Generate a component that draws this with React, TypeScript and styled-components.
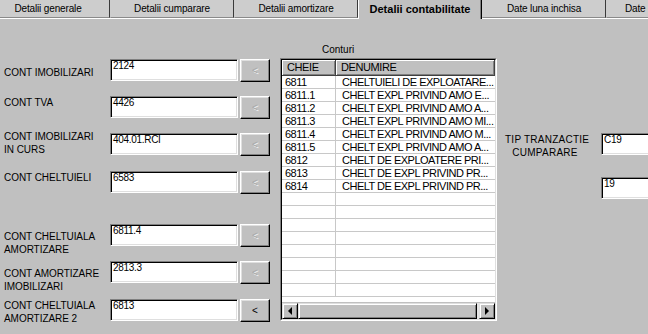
import { createGlobalStyle, styled } from 'styled-components';

const GlobalStyle = createGlobalStyle`
  html, body {
    margin: 0;
    padding: 0;
    background: #c0c0c0;
  }
  body {
    font-family: "Liberation Sans", Arial, sans-serif;
    font-size: 10px;
    color: #000;
  }
`;

const Screen = styled.div`
  width: 648px;
  height: 334px;
  overflow: hidden;
  background: #c0c0c0;
  display: flex;
  flex-direction: column;
`;

const TabStrip = styled.div`
  display: flex;
  align-items: flex-start;
  height: 18px;
  margin-left: -14px;
  position: relative;
  z-index: 1;
`;

const Tab = styled.div<{ $active?: boolean; $left?: boolean }>`
  flex: 0 0 124px;
  box-sizing: border-box;
  display: flex;
  align-items: center;
  justify-content: ${({ $left }) => ($left ? 'flex-start' : 'center')};
  padding-left: ${({ $left }) => ($left ? '18px' : '0')};
  white-space: nowrap;
  height: ${({ $active }) => ($active ? '19px' : '18px')};
  background: ${({ $active }) => ($active ? '#c0c0c0' : '#cdcdcd')};
  border-left: 1px solid ${({ $active }) => ($active ? '#fff' : 'transparent')};
  border-right: 1px solid ${({ $active }) => ($active ? '#000' : '#3a3a3a')};
  border-bottom: ${({ $active }) => ($active ? 'none' : '1px solid #8a8a8a')};
  box-shadow: ${({ $active }) => ($active ? 'inset -1px 0 #808080' : 'none')};
  font-size: ${({ $active }) => ($active ? '11px' : '10px')};
  font-weight: ${({ $active }) => ($active ? 'bold' : 'normal')};
  letter-spacing: ${({ $active }) => ($active ? '0' : '-0.15px')};
  padding-bottom: ${({ $active }) => ($active ? '2px' : '1px')};
`;

const Body = styled.div`
  flex: 1;
  display: flex;
  gap: 8px;
  padding-left: 4px;
  border-top: 1px solid #fff;
`;

const LeftColumn = styled.div`
  flex: 0 0 268px;
  padding-top: 40px;
  display: flex;
  flex-direction: column;
`;

const FieldRow = styled.div<{ $top: number }>`
  display: grid;
  grid-template-columns: 106px 128px 32px;
  grid-template-rows: 23px;
  height: 23px;
  align-items: start;
  margin-top: ${({ $top }) => $top}px;
`;

const FieldLabel = styled.div<{ $dy: number }>`
  line-height: 13px;
  letter-spacing: -0.05px;
  white-space: pre-line;
  margin-top: ${({ $dy }) => $dy}px;
`;

const Edit = styled.div<{ $width?: number }>`
  box-sizing: border-box;
  height: 22px;
  width: ${({ $width }) => ($width ? `${$width}px` : 'auto')};
  background: #fff;
  border: 1px solid;
  border-color: #808080 #fff #fff #808080;
  box-shadow: inset 1px 1px #000, inset -1px -1px #dfdfdf;
  padding: 1px 2px 0 2px;
  line-height: 9px;
  letter-spacing: -0.3px;
  white-space: nowrap;
`;

const PickButton = styled.div<{ $enabled?: boolean }>`
  box-sizing: border-box;
  height: 23px;
  margin-left: 2px;
  width: 30px;
  display: flex;
  align-items: center;
  justify-content: center;
  background: #c0c0c0;
  border: 1px solid;
  border-color: #fff #000 #000 #fff;
  box-shadow: inset -1px -1px #808080, inset 1px 1px #dfdfdf;
  font-size: 10px;
  color: ${({ $enabled }) => ($enabled ? '#000' : '#a8a8a8')};
  text-shadow: ${({ $enabled }) => ($enabled ? 'none' : '1px 1px #f4f4f4')};
`;

const GridSection = styled.div`
  flex: 0 0 217px;
  padding-top: 24px;
  display: flex;
  flex-direction: column;
`;

const GridCaption = styled.div`
  line-height: 13px;
  margin-left: 42px;
  margin-bottom: 2px;
`;

const GridFrame = styled.div`
  box-sizing: border-box;
  width: 217px;
  height: 263px;
  border: 1px solid;
  border-color: #808080 #fff #fff #808080;
`;

const GridInner = styled.div`
  box-sizing: border-box;
  height: 100%;
  border: 1px solid;
  border-color: #000 #dfdfdf #dfdfdf #000;
  display: flex;
  flex-direction: column;
`;

const GridHeader = styled.div`
  display: grid;
  grid-template-columns: 54px 1fr;
  height: 16px;
`;

const HeaderCell = styled.div<{ $pad: number }>`
  box-sizing: border-box;
  background: #c0c0c0;
  border-right: 1px solid #404040;
  border-bottom: 1px solid #404040;
  box-shadow: inset 1px 1px #fff, inset -1px -1px #808080;
  padding-left: ${({ $pad }) => $pad}px;
  font-size: 11px;
  line-height: 15px;
  letter-spacing: -0.4px;
`;

const GridRows = styled.div`
  height: 226px;
  overflow: hidden;
  background: #fff;
`;

const GridRow = styled.div`
  display: grid;
  grid-template-columns: 54px 1fr;
  height: 13px;
  box-sizing: border-box;
  border-bottom: 1px solid #c8c8c8;
`;

const Cell = styled.div<{ $pad: number; $divider?: boolean }>`
  padding-left: ${({ $pad }) => $pad}px;
  border-right: ${({ $divider }) => ($divider ? '1px solid #c8c8c8' : 'none')};
  font-size: 11px;
  line-height: 12px;
  letter-spacing: -0.5px;
  white-space: nowrap;
  overflow: hidden;
`;

const ScrollBar = styled.div`
  display: flex;
  height: 17px;
  background: #e4e4e4;
  border-top: 1px solid #c0c0c0;
  box-sizing: border-box;
`;

const ScrollPart = styled.div<{ $grow?: boolean; $end?: boolean }>`
  box-sizing: border-box;
  flex: ${({ $grow }) => ($grow ? '0 0 179px' : '0 0 16px')};
  margin-left: ${({ $end }) => ($end ? 'auto' : '0')};
  background: #c0c0c0;
  border: 1px solid;
  border-color: #dfdfdf #000 #000 #dfdfdf;
  box-shadow: inset 1px 1px #fff, inset -1px -1px #808080;
  display: flex;
  align-items: center;
  justify-content: center;
`;

const Arrow = styled.span<{ $dir: 'left' | 'right' }>`
  width: 0;
  height: 0;
  border-top: 4px solid transparent;
  border-bottom: 4px solid transparent;
  border-${({ $dir }) => ($dir === 'left' ? 'right' : 'left')}: 4px solid #000;
`;

const RightPanel = styled.div`
  flex: 0 0 auto;
  padding-top: 114px;
  display: grid;
  grid-template-columns: 80px 80px;
  grid-auto-rows: 22px;
  column-gap: 16px;
  row-gap: 22px;
  align-content: start;
`;

const SideLabel = styled.div`
  text-align: center;
  line-height: 13px;
  letter-spacing: 0.25px;
  white-space: nowrap;
`;

const fields = [
  { label: 'CONT IMOBILIZARI', value: '2124', top: 0, dy: 7 },
  { label: 'CONT TVA', value: '4426', top: 14, dy: 0 },
  { label: 'CONT IMOBILIZARI\nIN CURS', value: '404.01.RCI', top: 14, dy: -3 },
  { label: 'CONT CHELTUIELI', value: '6583', top: 15, dy: 0 },
  { label: 'CONT CHELTUIALA\nAMORTIZARE', value: '6811.4', top: 30, dy: 6 },
  { label: 'CONT AMORTIZARE\nIMOBILIZARI', value: '2813.3', top: 14, dy: 6 },
  { label: 'CONT CHELTUIALA\nAMORTIZARE 2', value: '6813', top: 15, dy: 0, enabled: true },
];

const accounts = [
  ['6811', 'CHELTUIELI DE EXPLOATARE...'],
  ['6811.1', 'CHELT EXPL PRIVIND AMO E...'],
  ['6811.2', 'CHELT EXPL PRIVIND AMO A...'],
  ['6811.3', 'CHELT EXPL PRIVIND AMO MI...'],
  ['6811.4', 'CHELT EXPL PRIVIND AMO M...'],
  ['6811.5', 'CHELT EXPL PRIVIND AMO A...'],
  ['6812', 'CHELT DE EXPLOATERE PRI...'],
  ['6813', 'CHELT DE EXPL PRIVIND PR...'],
  ['6814', 'CHELT DE EXPL PRIVIND PR...'],
];

const tabs = ['Detalii generale', 'Detalii cumparare', 'Detalii amortizare', 'Detalii contabilitate', 'Date luna inchisa'];

const App = () => {
  const rows = [...accounts, ...Array.from({ length: 8 }, () => ['', ''])];
  return (
    <Screen>
      <GlobalStyle />
      <TabStrip>
        {tabs.map((t) => (
          <Tab key={t} $active={t === 'Detalii contabilitate'}>{t}</Tab>
        ))}
        <Tab $left>Date</Tab>
      </TabStrip>
      <Body>
        <LeftColumn>
          {fields.map((f) => (
            <FieldRow key={f.label} $top={f.top}>
              <FieldLabel $dy={f.dy}>{f.label}</FieldLabel>
              <Edit>{f.value}</Edit>
              <PickButton $enabled={f.enabled}>&lt;</PickButton>
            </FieldRow>
          ))}
        </LeftColumn>
        <GridSection>
          <GridCaption>Conturi</GridCaption>
          <GridFrame>
            <GridInner>
              <GridHeader>
                <HeaderCell $pad={5}>CHEIE</HeaderCell>
                <HeaderCell $pad={5}>DENUMIRE</HeaderCell>
              </GridHeader>
              <GridRows>
                {rows.map(([code, name], i) => (
                  <GridRow key={i}>
                    <Cell $pad={3} $divider>{code}</Cell>
                    <Cell $pad={6}>{name}</Cell>
                  </GridRow>
                ))}
              </GridRows>
              <ScrollBar>
                <ScrollPart><Arrow $dir="left" /></ScrollPart>
                <ScrollPart $grow />
                <ScrollPart $end><Arrow $dir="right" /></ScrollPart>
              </ScrollBar>
            </GridInner>
          </GridFrame>
        </GridSection>
        <RightPanel>
          <SideLabel>TIP TRANZACTIE<br />CUMPARARE</SideLabel>
          <Edit $width={80}>C19</Edit>
          <div />
          <Edit $width={80}>19</Edit>
        </RightPanel>
      </Body>
    </Screen>
  );
};

export default App;
